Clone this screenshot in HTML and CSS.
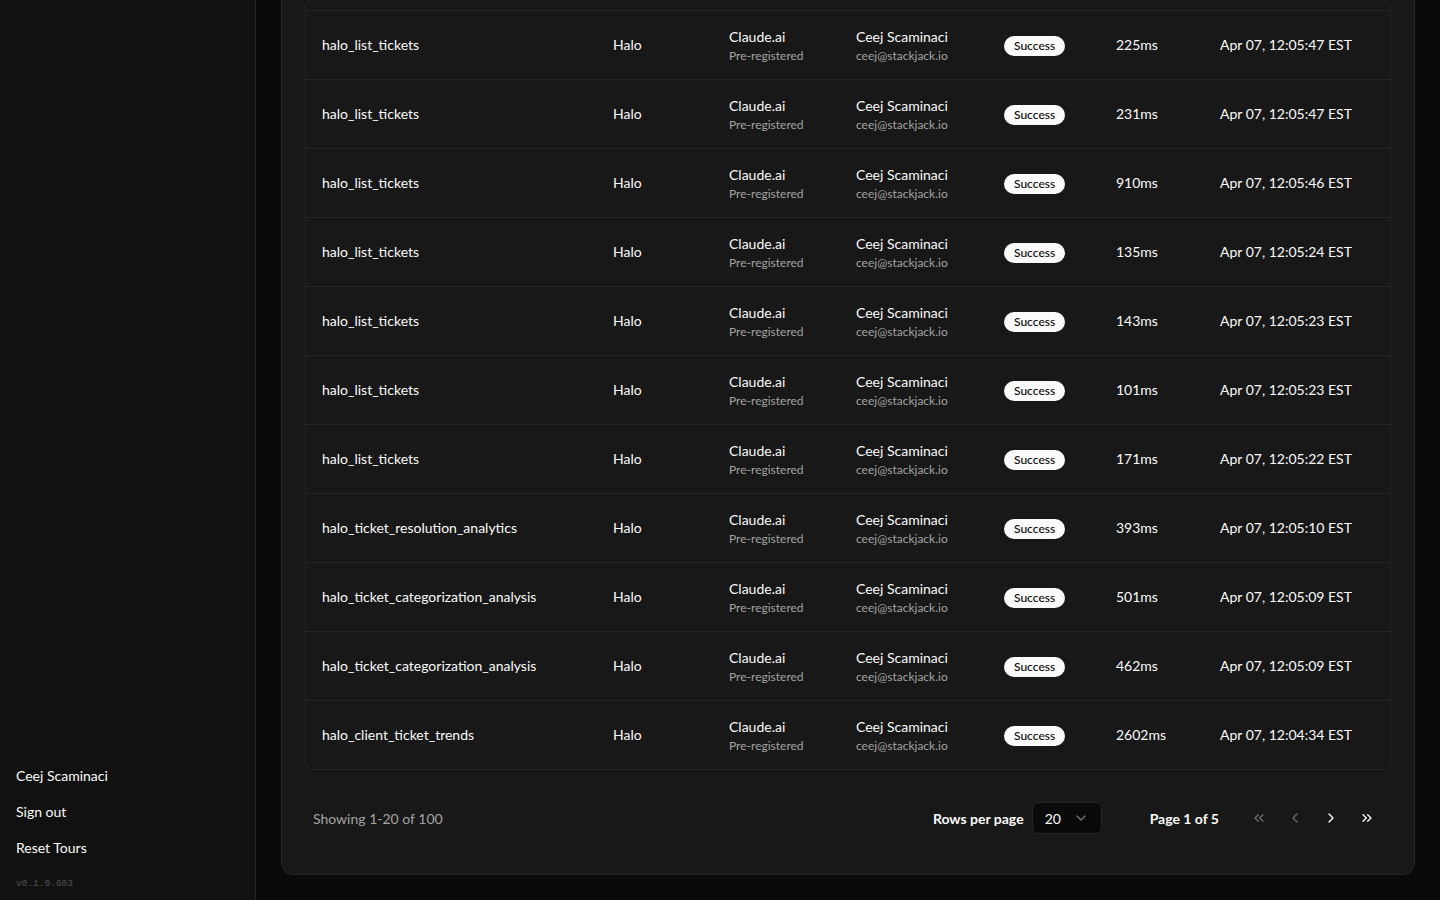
FILE: index.html
```html
<!DOCTYPE html>
<html lang="en">
<head>
<meta charset="utf-8">
<title>Tool calls</title>
<link rel="stylesheet" href="styles.css">
</head>
<body>
<div class="app">
  <aside class="sidebar">
    <div class="sidebar-spacer"></div>
    <nav class="sidebar-footer">
      <a class="side-link">Ceej Scaminaci</a>
      <a class="side-link">Sign out</a>
      <a class="side-link">Reset Tours</a>
      <div class="version">v0.1.0.603</div>
    </nav>
  </aside>
  <main class="main">
    <section class="card">
      <div class="table">
        <div class="row row-partial"></div>
        <div class="row"><div class="cell">halo_list_tickets</div><div class="cell">Halo</div><div class="cell stack"><span>Claude.ai</span><span class="sub">Pre-registered</span></div><div class="cell stack"><span>Ceej Scaminaci</span><span class="sub">ceej@stackjack.io</span></div><div class="cell"><span class="badge">Success</span></div><div class="cell">225ms</div><div class="cell">Apr 07, 12:05:47 EST</div></div>
        <div class="row"><div class="cell">halo_list_tickets</div><div class="cell">Halo</div><div class="cell stack"><span>Claude.ai</span><span class="sub">Pre-registered</span></div><div class="cell stack"><span>Ceej Scaminaci</span><span class="sub">ceej@stackjack.io</span></div><div class="cell"><span class="badge">Success</span></div><div class="cell">231ms</div><div class="cell">Apr 07, 12:05:47 EST</div></div>
        <div class="row"><div class="cell">halo_list_tickets</div><div class="cell">Halo</div><div class="cell stack"><span>Claude.ai</span><span class="sub">Pre-registered</span></div><div class="cell stack"><span>Ceej Scaminaci</span><span class="sub">ceej@stackjack.io</span></div><div class="cell"><span class="badge">Success</span></div><div class="cell">910ms</div><div class="cell">Apr 07, 12:05:46 EST</div></div>
        <div class="row"><div class="cell">halo_list_tickets</div><div class="cell">Halo</div><div class="cell stack"><span>Claude.ai</span><span class="sub">Pre-registered</span></div><div class="cell stack"><span>Ceej Scaminaci</span><span class="sub">ceej@stackjack.io</span></div><div class="cell"><span class="badge">Success</span></div><div class="cell">135ms</div><div class="cell">Apr 07, 12:05:24 EST</div></div>
        <div class="row"><div class="cell">halo_list_tickets</div><div class="cell">Halo</div><div class="cell stack"><span>Claude.ai</span><span class="sub">Pre-registered</span></div><div class="cell stack"><span>Ceej Scaminaci</span><span class="sub">ceej@stackjack.io</span></div><div class="cell"><span class="badge">Success</span></div><div class="cell">143ms</div><div class="cell">Apr 07, 12:05:23 EST</div></div>
        <div class="row"><div class="cell">halo_list_tickets</div><div class="cell">Halo</div><div class="cell stack"><span>Claude.ai</span><span class="sub">Pre-registered</span></div><div class="cell stack"><span>Ceej Scaminaci</span><span class="sub">ceej@stackjack.io</span></div><div class="cell"><span class="badge">Success</span></div><div class="cell">101ms</div><div class="cell">Apr 07, 12:05:23 EST</div></div>
        <div class="row"><div class="cell">halo_list_tickets</div><div class="cell">Halo</div><div class="cell stack"><span>Claude.ai</span><span class="sub">Pre-registered</span></div><div class="cell stack"><span>Ceej Scaminaci</span><span class="sub">ceej@stackjack.io</span></div><div class="cell"><span class="badge">Success</span></div><div class="cell">171ms</div><div class="cell">Apr 07, 12:05:22 EST</div></div>
        <div class="row"><div class="cell">halo_ticket_resolution_analytics</div><div class="cell">Halo</div><div class="cell stack"><span>Claude.ai</span><span class="sub">Pre-registered</span></div><div class="cell stack"><span>Ceej Scaminaci</span><span class="sub">ceej@stackjack.io</span></div><div class="cell"><span class="badge">Success</span></div><div class="cell">393ms</div><div class="cell">Apr 07, 12:05:10 EST</div></div>
        <div class="row"><div class="cell">halo_ticket_categorization_analysis</div><div class="cell">Halo</div><div class="cell stack"><span>Claude.ai</span><span class="sub">Pre-registered</span></div><div class="cell stack"><span>Ceej Scaminaci</span><span class="sub">ceej@stackjack.io</span></div><div class="cell"><span class="badge">Success</span></div><div class="cell">501ms</div><div class="cell">Apr 07, 12:05:09 EST</div></div>
        <div class="row"><div class="cell">halo_ticket_categorization_analysis</div><div class="cell">Halo</div><div class="cell stack"><span>Claude.ai</span><span class="sub">Pre-registered</span></div><div class="cell stack"><span>Ceej Scaminaci</span><span class="sub">ceej@stackjack.io</span></div><div class="cell"><span class="badge">Success</span></div><div class="cell">462ms</div><div class="cell">Apr 07, 12:05:09 EST</div></div>
        <div class="row last"><div class="cell">halo_client_ticket_trends</div><div class="cell">Halo</div><div class="cell stack"><span>Claude.ai</span><span class="sub">Pre-registered</span></div><div class="cell stack"><span>Ceej Scaminaci</span><span class="sub">ceej@stackjack.io</span></div><div class="cell"><span class="badge">Success</span></div><div class="cell">2602ms</div><div class="cell">Apr 07, 12:04:34 EST</div></div>
      </div>
      <div class="pager">
        <div class="showing">Showing 1-20 of 100</div>
        <div class="pager-right">
          <div class="rows-per-page">
            <span class="label">Rows per page</span>
            <button class="select">20
              <svg width="16" height="16" viewBox="0 0 24 24" fill="none" stroke="currentColor" stroke-width="2" stroke-linecap="round" stroke-linejoin="round"><path d="m6 9 6 6 6-6"/></svg>
            </button>
          </div>
          <span class="label page-label">Page 1 of 5</span>
          <div class="nav">
            <button class="nav-btn disabled"><svg width="16" height="16" viewBox="0 0 24 24" fill="none" stroke="currentColor" stroke-width="2" stroke-linecap="round" stroke-linejoin="round"><path d="m11 17-5-5 5-5"/><path d="m18 17-5-5 5-5"/></svg></button>
            <button class="nav-btn disabled"><svg width="16" height="16" viewBox="0 0 24 24" fill="none" stroke="currentColor" stroke-width="2" stroke-linecap="round" stroke-linejoin="round"><path d="m15 18-6-6 6-6"/></svg></button>
            <button class="nav-btn"><svg width="16" height="16" viewBox="0 0 24 24" fill="none" stroke="currentColor" stroke-width="2" stroke-linecap="round" stroke-linejoin="round"><path d="m9 18 6-6-6-6"/></svg></button>
            <button class="nav-btn"><svg width="16" height="16" viewBox="0 0 24 24" fill="none" stroke="currentColor" stroke-width="2" stroke-linecap="round" stroke-linejoin="round"><path d="m6 17 5-5-5-5"/><path d="m13 17 5-5-5-5"/></svg></button>
          </div>
        </div>
      </div>
    </section>
  </main>
</div>
</body>
</html>
```
FILE: styles.css
```css
* { box-sizing: border-box; }
html, body { margin: 0; padding: 0; height: 100%; }
body {
  background: #0a0a0a;
  color: #fafafa;
  font-family: Lato, "Noto Sans", sans-serif;
  font-size: 14px;
  overflow: hidden;
}
.app { display: flex; height: 900px; }
.sidebar {
  width: 256px;
  flex: none;
  background: #111111;
  border-right: 1px solid #262626;
  display: flex;
  flex-direction: column;
}
.sidebar-spacer { flex: 1; }
.sidebar-footer {
  display: flex;
  flex-direction: column;
  padding: 0 16px 9px;
}
.side-link {
  color: #fafafa;
  font-size: 14px;
  line-height: 20px;
  padding: 8px 0;
}
.version {
  margin-top: 11px;
  font-family: "Liberation Mono", "DejaVu Sans Mono", monospace;
  font-size: 9.5px;
  line-height: 14px;
  color: #525252;
}
.main {
  flex: 1;
  padding: 0 25px 25px;
  display: flex;
  flex-direction: column;
  justify-content: flex-end;
  overflow: hidden;
}
.card {
  background: #181818;
  border: 1px solid #262626;
  border-radius: 12px;
  padding: 23px;
  padding-bottom: 24px;
}
.table {
  border: 1px solid #262626;
  border-radius: 8px;
}
.row {
  display: grid;
  grid-template-columns: 291px 116px 127px 148px 112px 104px 1fr;
  height: 69px;
  border-bottom: 1px solid #262626;
  align-items: center;
}
.row.row-partial { height: 11px; }
.row.last { border-bottom: none; height: 68px; }
.cell {
  padding: 0 16px;
  white-space: nowrap;
  line-height: 20px;
}
.stack { display: flex; flex-direction: column; padding-top: 2px; }
.stack span { line-height: 19px; }
.sub { color: #a3a3a3; font-size: 12px; }
.badge {
  display: inline-block;
  background: #fafafa;
  color: #0a0a0a;
  font-size: 12px;
  line-height: 18px;
  padding: 1px 10px;
  border-radius: 999px;
  font-weight: 500;
}
.pager {
  display: flex;
  align-items: center;
  justify-content: space-between;
  padding: 32px 8px 16px;
}
.showing { color: #a3a3a3; font-size: 14px; }
.pager-right { display: flex; align-items: center; }
.rows-per-page { display: flex; align-items: center; gap: 8px; margin-right: 48px; }
.label { font-weight: 700; font-size: 14px; }
.select {
  display: flex;
  align-items: center;
  justify-content: space-between;
  width: 70px;
  height: 32px;
  padding: 0 12px;
  background: #0a0a0a;
  border: 1px solid #262626;
  border-radius: 6px;
  color: #fafafa;
  font: inherit;
  font-size: 14px;
}
.select svg { color: #737373; }
.page-label { margin-right: 24px; }
.nav { display: flex; gap: 4px; }
.nav-btn {
  width: 32px;
  height: 32px;
  display: flex;
  align-items: center;
  justify-content: center;
  background: transparent;
  border: none;
  color: #fafafa;
  padding: 0;
}
.nav-btn.disabled { color: #6b6b6b; }
```
